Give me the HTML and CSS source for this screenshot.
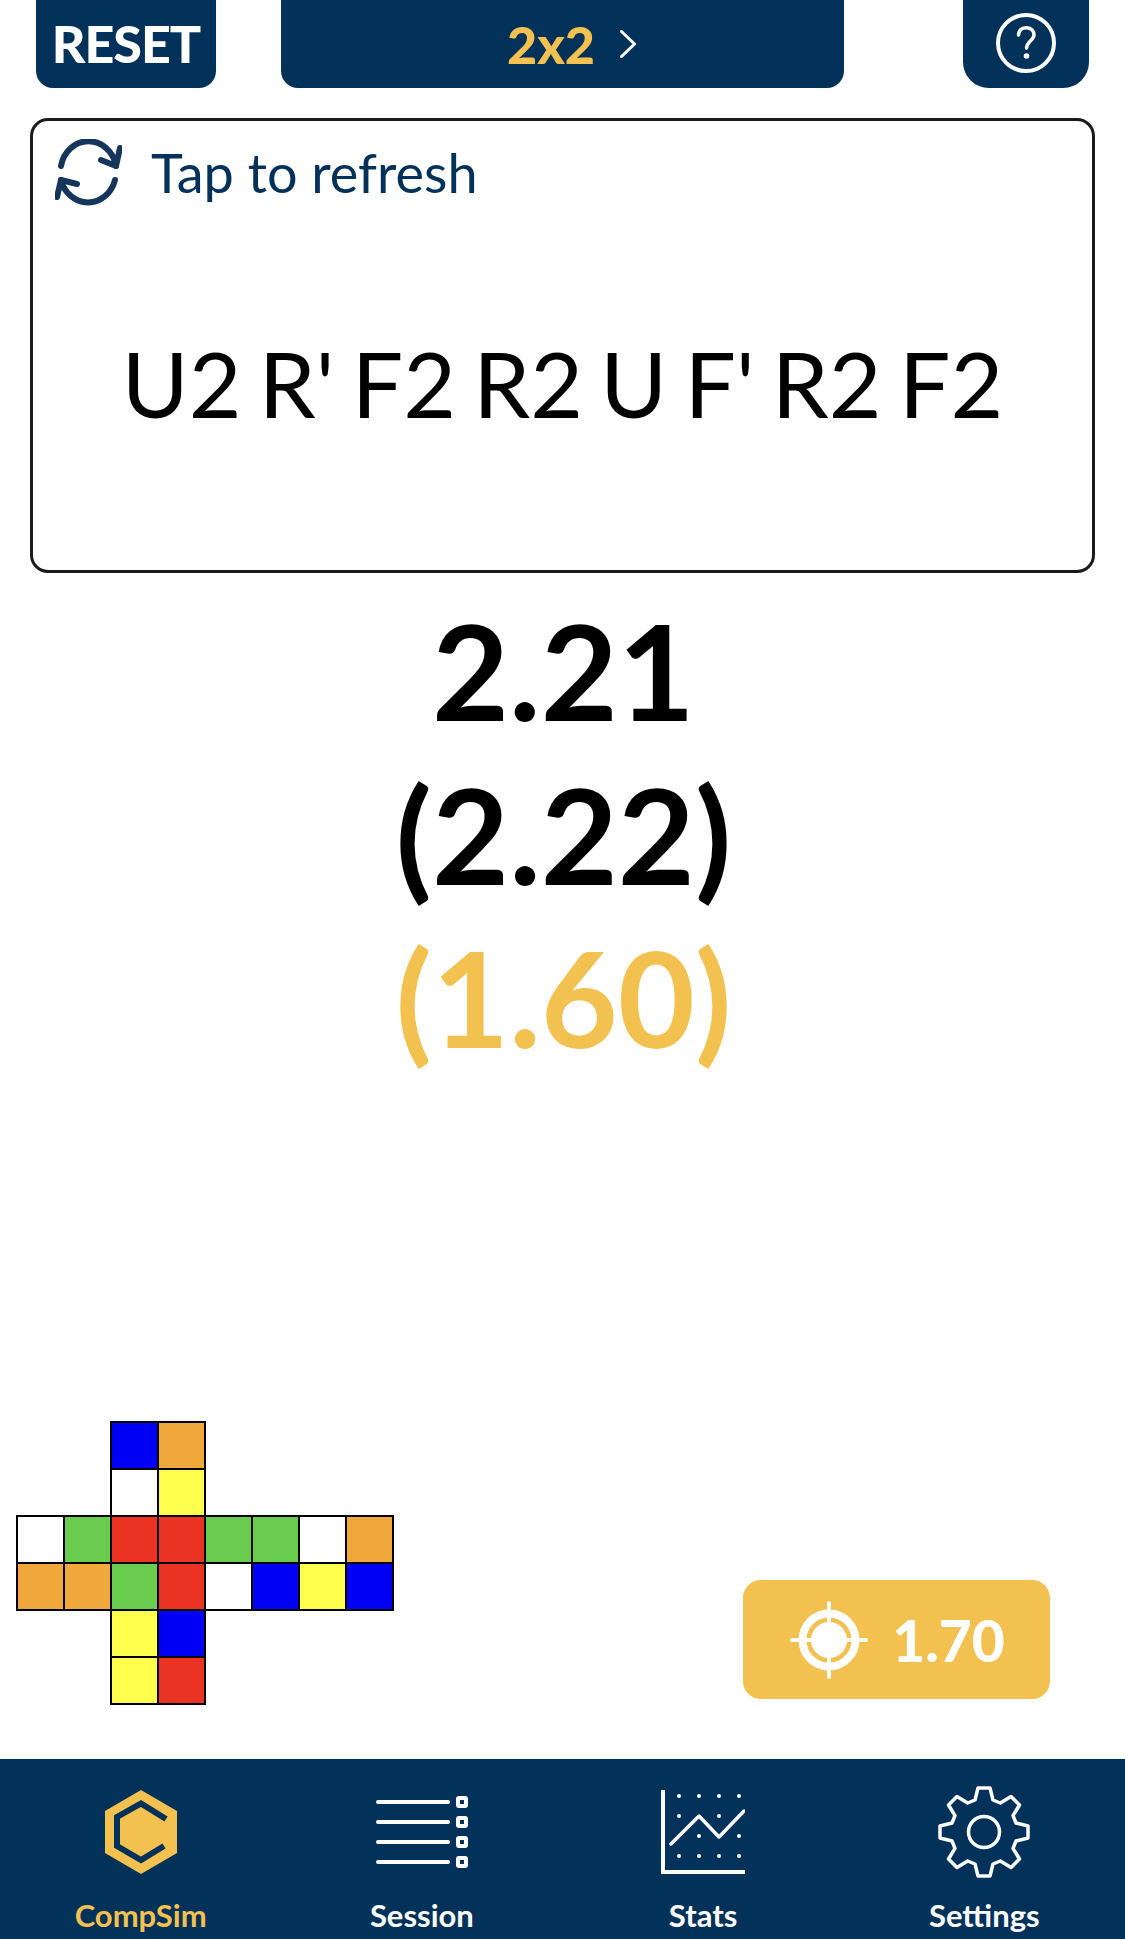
FILE: index.html
```html
<!DOCTYPE html>
<html lang="en">
<head>
    <meta charset="UTF-8">
    <meta name="viewport" content="width=device-width, initial-scale=1.0">
    <title>CompSim</title>
    <link rel="stylesheet" href="styles.css">
</head>
<body>

    <header class="topbar">
        <div class="reset-btn">RESET</div>
        <div class="mode-btn">
            <span class="mode-text">2x2</span>
            <svg class="mode-arrow" width="16" height="28" viewBox="0 0 16 28">
                <path d="M1.5 1.5 L14.5 14 L1.5 26.500" />
            </svg>
        </div>
        <div class="help-btn">
            <svg width="60" height="60" viewBox="0 0 60 60">
                <circle class="line" cx="30" cy="30" r="28" />
                <path class="line thin" d="M22.500 22 C23 12 38 12.500 38 22 C38 27 31 28 30.500 35" />
                <circle class="dot" cx="30.500" cy="43" r="2.800" />
            </svg>
        </div>
    </header>

    <section class="scramble-card">
        <div class="refresh-row">
            <svg class="refresh-icon" width="67" height="67" viewBox="0 0 67 67">
                <path d="M6 27 A28 30.500 0 0 1 61 27" />
                <path d="M65 9 L61 27 L46 21" />
                <path d="M60 41 A28 30.500 0 0 1 6 41" />
                <path d="M2 58 L6 41 L22 45" />
            </svg>
            <span>Tap to refresh</span>
        </div>
        <div class="scramble">U2 R' F2 R2 U F' R2 F2</div>
    </section>

    <section class="times">
        <div>2.21</div>
        <div>(2.22)</div>
        <div class="best">(1.60)</div>
    </section>

    <section class="bottom-row">
        <div class="net">
            <i></i><i></i><b class="blue"></b><b class="orange"></b><i></i><i></i><i></i><i></i>
            <i></i><i></i><b class="white"></b><b class="yellow"></b><i></i><i></i><i></i><i></i>
            <b class="white"></b><b class="green"></b><b class="red"></b><b class="red"></b><b class="green"></b><b class="green"></b><b class="white"></b><b class="orange"></b>
            <b class="orange"></b><b class="orange"></b><b class="green"></b><b class="red"></b><b class="white"></b><b class="blue"></b><b class="yellow"></b><b class="blue"></b>
            <i></i><i></i><b class="yellow"></b><b class="blue"></b><i></i><i></i><i></i><i></i>
            <i></i><i></i><b class="yellow"></b><b class="red"></b><i></i><i></i><i></i><i></i>
        </div>
        <div class="target-btn">
            <svg width="78" height="78" viewBox="0 0 78 78">
                <circle class="ring" cx="39" cy="39" r="26.500" />
                <circle class="core" cx="39" cy="39" r="18" />
                <path class="cross" d="M39 2 V76 M2 39 H76" />
            </svg>
            <span>1.70</span>
        </div>
    </section>

    <nav class="tabbar">
        <div class="tab active">
            <div class="tab-icon">
                <svg width="72" height="84" viewBox="0 0 72 84">
                    <polygon class="hex" points="36,0 72,21 72,63 36,84 0,63 0,21" />
                    <path class="hex-cut" d="M61 29 L36 13.500 L12 27 V56 L36 70 L59 56" />
                </svg>
            </div>
            <span>CompSim</span>
        </div>
        <div class="tab">
            <div class="tab-icon">
                <svg width="92" height="72" viewBox="0 0 92 72">
                    <path class="line" d="M2 6 H72 M2 26 H72 M2 46 H72 M2 66 H72" />
                    <rect class="square" x="82" y="2" width="8" height="8" rx="1" />
                    <rect class="square" x="82" y="22" width="8" height="8" rx="1" />
                    <rect class="square" x="82" y="42" width="8" height="8" rx="1" />
                    <rect class="square" x="82" y="62" width="8" height="8" rx="1" />
                </svg>
            </div>
            <span>Session</span>
        </div>
        <div class="tab">
            <div class="tab-icon">
                <svg width="84" height="84" viewBox="0 0 84 84">
                    <path class="axis" d="M2 0 V82 H84" />
                    <path class="line thin" d="M10 54 L38 26 L58 47 L83 21" />
                    <g class="dots">
                        <circle cx="18" cy="6" r="2" /><circle cx="38" cy="6" r="2" /><circle cx="58" cy="6" r="2" /><circle cx="78" cy="6" r="2" />
                        <circle cx="18" cy="26" r="2" /><circle cx="58" cy="26" r="2" />
                        <circle cx="38" cy="46" r="2" /><circle cx="78" cy="46" r="2" />
                        <circle cx="18" cy="66" r="2" /><circle cx="38" cy="66" r="2" /><circle cx="58" cy="66" r="2" /><circle cx="78" cy="66" r="2" />
                    </g>
                </svg>
            </div>
            <span>Stats</span>
        </div>
        <div class="tab">
            <div class="tab-icon">
                <svg width="92" height="92" viewBox="-46 -46 92 92">
                    <path class="line gear" d="M-9 -32 L-6 -44 L6 -44 L9 -32 L16.300 -29 L27 -35.500 L35.500 -27 L29 -16.300 L32 -9 L44 -6 L44 6 L32 9 L29 16.300 L35.500 27 L27 35.500 L16.300 29 L9 32 L6 44 L-6 44 L-9 32 L-16.300 29 L-27 35.500 L-35.500 27 L-29 16.300 L-32 9 L-44 6 L-44 -6 L-32 -9 L-29 -16.300 L-35.500 -27 L-27 -35.500 L-16.300 -29 Z" />
                    <circle class="line gear" cx="0" cy="0" r="15.500" />
                </svg>
            </div>
            <span>Settings</span>
        </div>
    </nav>

</body>
</html>
```

FILE: styles.css
```css
* {
    box-sizing: border-box;
}
body {
    font-family: Lato, sans-serif;
    margin: 0;
    padding: 0;
    width: 1125px;
    height: 1939px;
    display: flex;
    flex-direction: column;
    overflow: hidden;
    background-color: white;
    color: black;
}

/* top buttons */
.topbar {
    display: flex;
    height: 88px;
    padding-left: 36px;
}
.reset-btn, .mode-btn, .help-btn {
    display: flex;
    align-items: center;
    justify-content: center;
    height: 88px;
    background-color: #02315a;
    border-radius: 0 0 17px 17px;
}
.reset-btn {
    width: 180px;
    margin-right: 65px;
    padding-bottom: 3px;
    color: white;
    font-size: 52px;
    font-weight: 900;
    letter-spacing: -1px;
}
.mode-btn {
    width: 563px;
    margin-right: 119px;
    padding-left: 18px;
    gap: 25px;
}
.mode-text {
    color: #f3c14f;
    font-size: 52px;
    font-weight: 900;
}
.mode-arrow path {
    fill: none;
    stroke: white;
    stroke-width: 3px;
    stroke-linecap: round;
    stroke-linejoin: round;
}
.help-btn {
    width: 126px;
    border-radius: 0 0 26px 26px;
}
.help-btn svg {
    margin-top: -2px;
}
.line {
    fill: none;
    stroke: white;
    stroke-width: 4px;
    stroke-linecap: round;
    stroke-linejoin: round;
}
.thin {
    stroke-width: 3.500px;
}
.dot {
    fill: white;
}

/* scramble */
.scramble-card {
    height: 455px;
    margin: 30px 30px 0;
    padding: 18px 22px 0;
    border: 3px solid #1b1b1b;
    border-radius: 18px;
}
.refresh-row {
    display: flex;
    align-items: center;
    gap: 29px;
    color: #02315a;
    font-size: 54px;
}
.refresh-icon path {
    fill: none;
    stroke: #15355a;
    stroke-width: 6px;
    stroke-linecap: round;
    stroke-linejoin: round;
}
.scramble {
    margin-top: 122px;
    text-align: center;
    font-size: 91px;
    line-height: 110px;
    word-spacing: -6px;
    white-space: nowrap;
}

/* times */
.times {
    margin-top: 15px;
    padding-left: 2px;
    text-align: center;
    font-size: 133px;
    font-weight: 700;
    line-height: 163.500px;
}
.best {
    color: #f3c14f;
}

/* cube net and target */
.bottom-row {
    flex: 1;
    display: flex;
    align-items: flex-end;
    justify-content: space-between;
    padding: 0 75px 55px 17px;
}
.net {
    display: grid;
    grid-template-columns: repeat(8, 47px);
    grid-auto-rows: 47px;
}
.net b {
    margin: -1px;
    border: 2px solid black;
}
.white { background-color: white; }
.blue { background-color: #0000f5; }
.orange { background-color: #f0a83c; }
.yellow { background-color: #ffff4d; }
.green { background-color: #6acc4e; }
.red { background-color: #ea3323; }

.target-btn {
    display: flex;
    align-items: center;
    justify-content: center;
    gap: 24px;
    width: 307px;
    height: 119px;
    margin-bottom: 5px;
    padding-left: 2px;
    background-color: #f3c14f;
    border-radius: 18px;
    color: white;
    font-size: 57px;
    font-weight: 900;
}
.ring {
    fill: none;
    stroke: white;
    stroke-width: 8px;
}
.core {
    fill: white;
}
.cross {
    stroke: white;
    stroke-width: 4px;
    stroke-linecap: round;
}

/* bottom nav */
.tabbar {
    display: grid;
    grid-template-columns: repeat(4, 1fr);
    height: 180px;
    background-color: #02315a;
}
.tab {
    display: flex;
    flex-direction: column;
    align-items: center;
    padding-top: 27px;
    color: white;
    font-size: 31px;
    font-weight: 700;
}
.tab-icon {
    display: flex;
    align-items: center;
    justify-content: center;
    height: 92px;
    margin-bottom: 18px;
}
.tab.active {
    color: #f3c14f;
}
.hex {
    fill: #f3c14f;
}
.hex-cut {
    fill: none;
    stroke: #02315a;
    stroke-width: 6px;
}
.square {
    fill: #02315a;
    stroke: white;
    stroke-width: 4px;
}
.axis {
    fill: none;
    stroke: white;
    stroke-width: 4px;
}
.dots {
    fill: white;
}
.gear {
    stroke-width: 3.500px;
}
```
